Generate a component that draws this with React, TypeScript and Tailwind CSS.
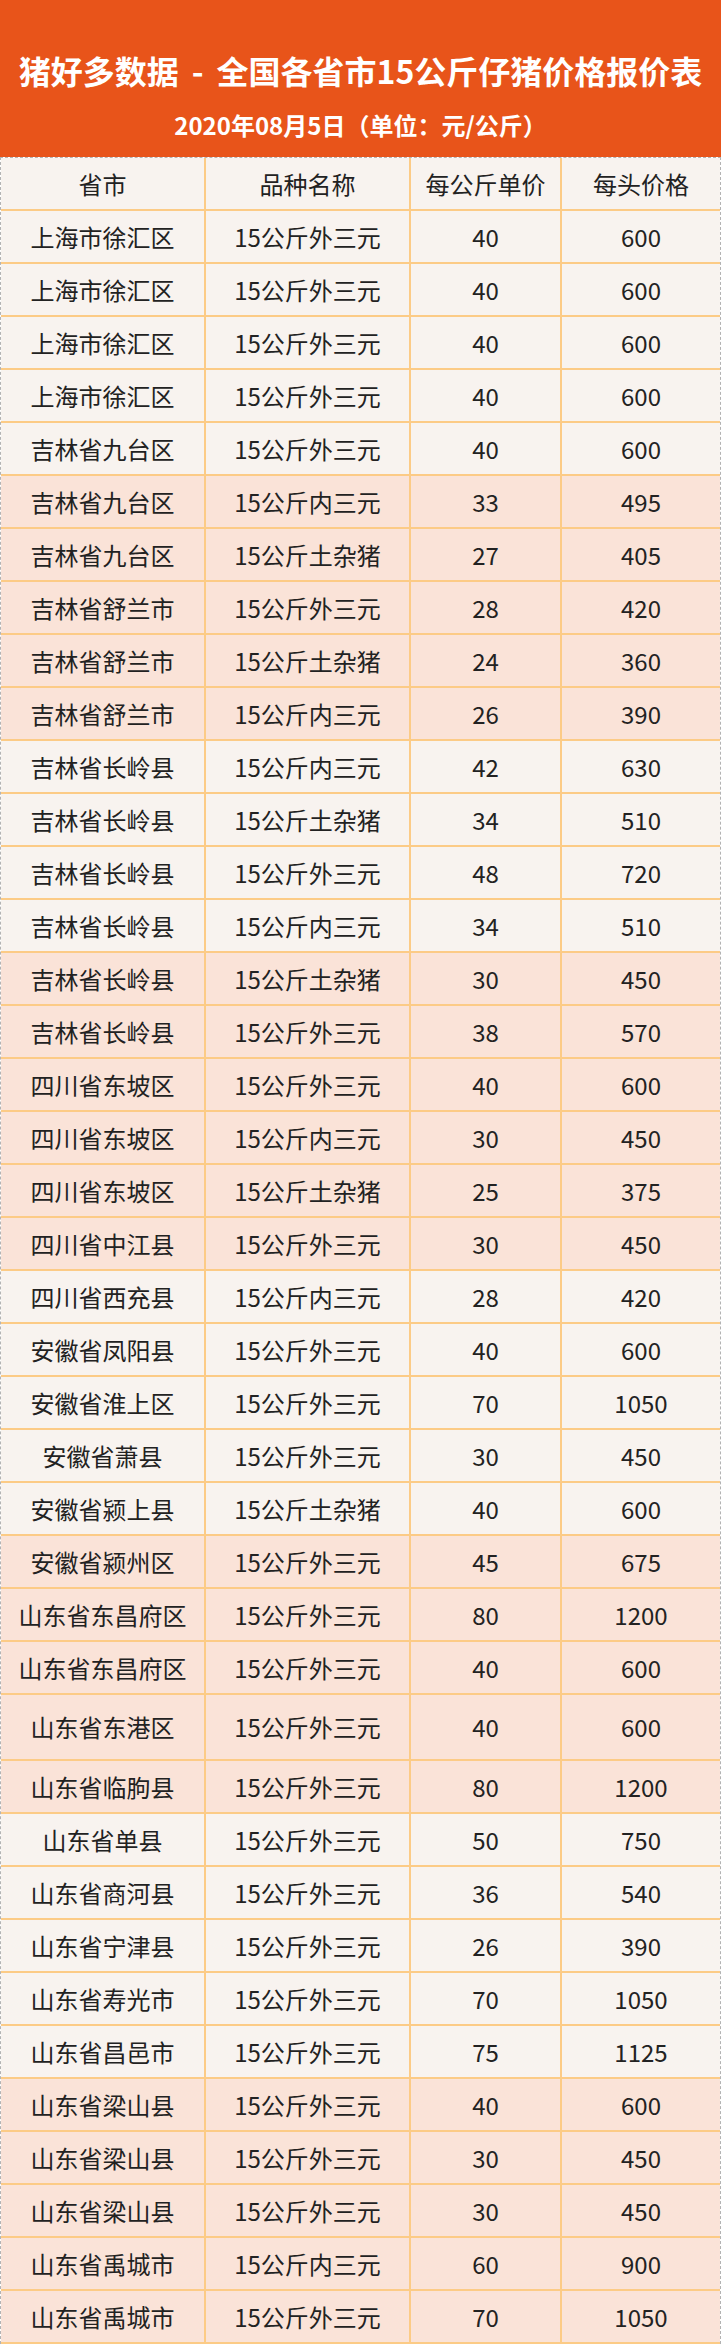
type Row = [string, string, number, number, boolean];

// [省市, 品种, 每公斤单价, 每头价格, 粉色底]
const rows: Row[] = [
  ['上海市徐汇区', '15公斤外三元', 40, 600, false],
  ['上海市徐汇区', '15公斤外三元', 40, 600, false],
  ['上海市徐汇区', '15公斤外三元', 40, 600, false],
  ['上海市徐汇区', '15公斤外三元', 40, 600, false],
  ['吉林省九台区', '15公斤外三元', 40, 600, false],
  ['吉林省九台区', '15公斤内三元', 33, 495, true],
  ['吉林省九台区', '15公斤土杂猪', 27, 405, true],
  ['吉林省舒兰市', '15公斤外三元', 28, 420, true],
  ['吉林省舒兰市', '15公斤土杂猪', 24, 360, true],
  ['吉林省舒兰市', '15公斤内三元', 26, 390, true],
  ['吉林省长岭县', '15公斤内三元', 42, 630, false],
  ['吉林省长岭县', '15公斤土杂猪', 34, 510, false],
  ['吉林省长岭县', '15公斤外三元', 48, 720, false],
  ['吉林省长岭县', '15公斤内三元', 34, 510, false],
  ['吉林省长岭县', '15公斤土杂猪', 30, 450, true],
  ['吉林省长岭县', '15公斤外三元', 38, 570, true],
  ['四川省东坡区', '15公斤外三元', 40, 600, true],
  ['四川省东坡区', '15公斤内三元', 30, 450, true],
  ['四川省东坡区', '15公斤土杂猪', 25, 375, true],
  ['四川省中江县', '15公斤外三元', 30, 450, true],
  ['四川省西充县', '15公斤内三元', 28, 420, false],
  ['安徽省凤阳县', '15公斤外三元', 40, 600, false],
  ['安徽省淮上区', '15公斤外三元', 70, 1050, false],
  ['安徽省萧县', '15公斤外三元', 30, 450, false],
  ['安徽省颍上县', '15公斤土杂猪', 40, 600, false],
  ['安徽省颍州区', '15公斤外三元', 45, 675, true],
  ['山东省东昌府区', '15公斤外三元', 80, 1200, true],
  ['山东省东昌府区', '15公斤外三元', 40, 600, true],
  ['山东省东港区', '15公斤外三元', 40, 600, true],
  ['山东省临朐县', '15公斤外三元', 80, 1200, true],
  ['山东省单县', '15公斤外三元', 50, 750, false],
  ['山东省商河县', '15公斤外三元', 36, 540, false],
  ['山东省宁津县', '15公斤外三元', 26, 390, false],
  ['山东省寿光市', '15公斤外三元', 70, 1050, false],
  ['山东省昌邑市', '15公斤外三元', 75, 1125, false],
  ['山东省梁山县', '15公斤外三元', 40, 600, true],
  ['山东省梁山县', '15公斤外三元', 30, 450, true],
  ['山东省梁山县', '15公斤外三元', 30, 450, true],
  ['山东省禹城市', '15公斤内三元', 60, 900, true],
  ['山东省禹城市', '15公斤外三元', 70, 1050, true],
];

function Cell({ children, last = false }: { children: React.ReactNode; last?: boolean }) {
  return (
    <div
      className={
        last
          ? 'flex items-center justify-center'
          : 'flex items-center justify-center border-r-2 border-[#fccb86]'
      }
    >
      {children}
    </div>
  );
}

function TableRow({ cells, pink, tall }: { cells: React.ReactNode[]; pink: boolean; tall?: boolean }) {
  return (
    <div
      className={`grid grid-cols-[205px_205px_151px_1fr] border-b-2 border-[#fccb86] ${
        tall ? 'h-[66px]' : 'h-[53px]'
      } ${pink ? 'bg-[#fae3d8]' : 'bg-[#f8f3ef]'}`}
    >
      {cells.map((c, i) => (
        <Cell key={i} last={i === cells.length - 1}>
          {c}
        </Cell>
      ))}
    </div>
  );
}

export default function App() {
  return (
    <div className="w-[721px] bg-white font-['Noto_Sans_CJK_SC',sans-serif]">
      <div className="flex h-[157px] flex-col items-center bg-[#e8541a] pt-[50px] text-white">
        <div className="flex h-[40px] items-center text-[32px] font-bold leading-none">
          <span>猪好多数据</span>
          <span className="mx-[13px]">-</span>
          <span>全国各省市15公斤仔猪价格报价表</span>
        </div>
        <div className="mt-[19px] flex h-[32px] items-center text-[24px] font-bold leading-none">
          2020年08月5日（单位：元/公斤）
        </div>
      </div>

      <div className="border-x border-t border-dashed border-[#b3b3b3] text-[24px] text-[#222]">
        <TableRow pink={false} cells={['省市', '品种名称', '每公斤单价', '每头价格']} />
        {rows.map(([city, kind, unit, price, pink], i) => (
          <TableRow
            key={i}
            pink={pink}
            tall={i === 28}
            cells={[city, kind, unit, price]}
          />
        ))}
      </div>
    </div>
  );
}
